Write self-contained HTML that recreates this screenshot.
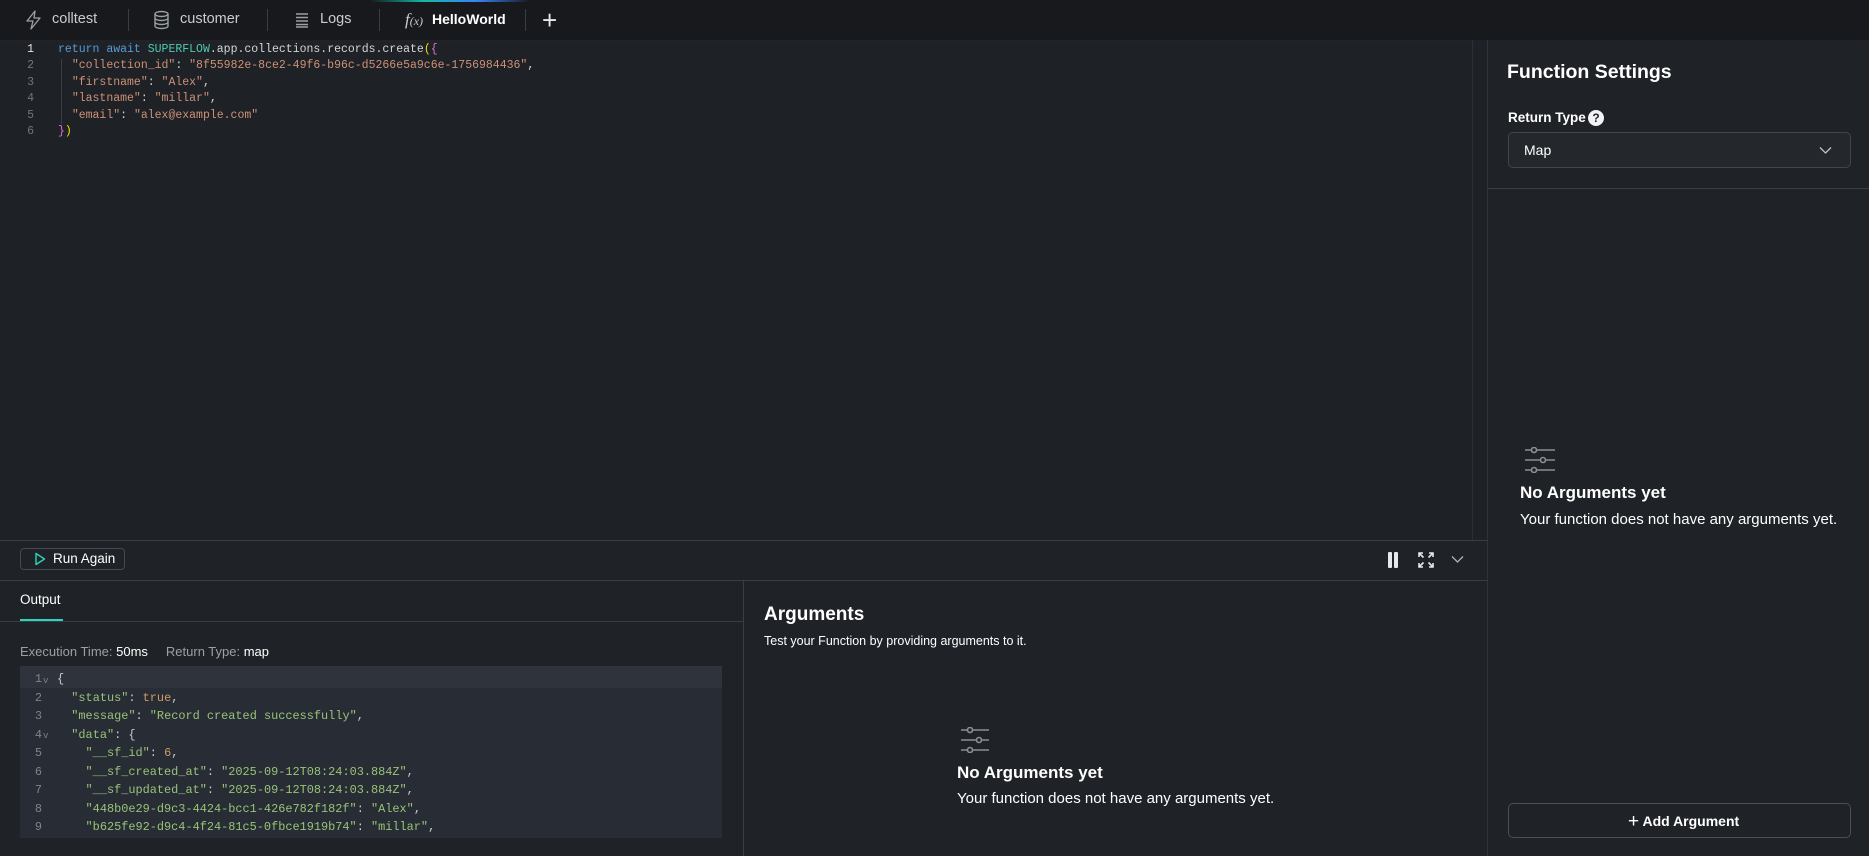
<!DOCTYPE html>
<html><head><meta charset="utf-8">
<style>
*{box-sizing:border-box;margin:0;padding:0}
body{width:1869px;height:856px;overflow:hidden;background:#1f2226;font-family:"Liberation Sans",sans-serif;color:#e6e8ea;position:relative}
.abs{position:absolute}
.top{left:0;top:0;width:1869px;height:40px;background:#17191c}
.tab{position:absolute;top:11px;font-size:14.5px;color:#c9ccd0;white-space:nowrap}
.sep{position:absolute;top:9px;width:1px;height:22px;background:#3a3e44}
.mono{font-family:"Liberation Mono",monospace}
.ed{left:0;top:43px;width:1487px;height:497px;background:#1e2125}
.ln{position:absolute;left:16px;width:18px;text-align:right;color:#6e7681;font-size:11.5px}
.cl{position:absolute;left:58px;font-size:11.5px;white-space:pre;color:#d4d4d4}
.s{color:#ce9178}.k{color:#569cd6}.t{color:#4ec9b0}.y{color:#ffd700}.p{color:#da70d6}
.out .ol{position:absolute;left:28px;width:14px;text-align:right;color:#7d848e;font-size:11.9px}
.out .oc{position:absolute;left:57px;white-space:pre;font-size:11.9px;color:#c8ccd2}
.g{color:#98c379}.o{color:#d19a66}
</style></head><body>
<div class="abs top"></div>
<div class="abs" style="left:370px;top:0;width:160px;height:2px;background:linear-gradient(90deg,rgba(20,184,166,0),#14b8a6,#3b82f6,rgba(59,130,246,0))"></div>
<svg class="abs" style="left:25px;top:10px" width="17" height="20" viewBox="0 0 17 20"><path d="M10 1 L2 11 H8 L6 19 L15 8 H9 Z" fill="none" stroke="#9aa0a6" stroke-width="1.3" stroke-linejoin="round"/></svg>
<div class="tab" style="left:52px">colltest</div>
<div class="sep" style="left:128px"></div>
<svg class="abs" style="left:153px;top:10px" width="17" height="20" viewBox="0 0 17 20"><ellipse cx="8.5" cy="4" rx="6.5" ry="2.5" fill="none" stroke="#9aa0a6" stroke-width="1.4"/><path d="M2 4v12c0 1.4 2.9 2.5 6.5 2.5S15 17.4 15 16V4M2 8c0 1.4 2.9 2.5 6.5 2.5S15 9.4 15 8M2 12c0 1.4 2.9 2.5 6.5 2.5S15 13.4 15 12" fill="none" stroke="#9aa0a6" stroke-width="1.4"/></svg>
<div class="tab" style="left:180px">customer</div>
<div class="sep" style="left:267px"></div>
<svg class="abs" style="left:294px;top:12px" width="16" height="16" viewBox="0 0 16 16"><g stroke="#9aa0a6" stroke-width="1.4"><path d="M2 2h12M2 5.5h12M2 9h12M2 12.5h12M2 15h12"/></g></svg>
<div class="tab" style="left:320px">Logs</div>
<div class="sep" style="left:379px"></div>
<div class="tab" style="left:405px;top:10px;font-family:'Liberation Serif',serif;font-style:italic;color:#c9ccd0;font-size:17px">f<span style="font-size:12px">(x)</span></div>
<div class="tab" style="left:432px;color:#fff;font-weight:bold;font-size:14px">HelloWorld</div>
<div class="sep" style="left:525px"></div>
<div class="tab" style="left:542px;top:5px;font-size:26px;color:#e6e8ea;font-weight:300">+</div>

<div class="abs ed mono">
<div class="ln" style="top:0px;color:#e6e8ea">1</div><div class="cl" style="top:0px"><span class="k">return</span> <span class="k">await</span> <span class="t">SUPERFLOW</span>.app.collections.records.create<span class="y">(</span><span class="p">{</span></div>
<div class="ln" style="top:16.4px">2</div><div class="cl" style="top:16.4px">  <span class="s">"collection_id"</span>: <span class="s">"8f55982e-8ce2-49f6-b96c-d5266e5a9c6e-1756984436"</span>,</div>
<div class="ln" style="top:32.8px">3</div><div class="cl" style="top:32.8px">  <span class="s">"firstname"</span>: <span class="s">"Alex"</span>,</div>
<div class="ln" style="top:49.2px">4</div><div class="cl" style="top:49.2px">  <span class="s">"lastname"</span>: <span class="s">"millar"</span>,</div>
<div class="ln" style="top:65.6px">5</div><div class="cl" style="top:65.6px">  <span class="s">"email"</span>: <span class="s">"alex@example.com"</span></div>
<div class="ln" style="top:82px">6</div><div class="cl" style="top:82px"><span class="p">}</span><span class="y">)</span></div>
<div class="abs" style="left:61px;top:16px;width:1px;height:65px;background:#3a3e44"></div>
</div>
<div class="abs" style="left:1472px;top:40px;width:1px;height:500px;background:#2c3036"></div>
<div class="abs" style="left:1487px;top:40px;width:1px;height:816px;background:#30343a"></div>

<div class="abs" style="left:0;top:540px;width:1487px;height:1px;background:#3a3e44"></div>
<div class="abs" style="left:20px;top:548px;width:105px;height:22px;border:1px solid #454a51;border-radius:4px;background:#1f2226"></div>
<svg class="abs" style="left:34px;top:552px" width="12" height="14" viewBox="0 0 12 14"><path d="M2 1.5 L10.5 7 L2 12.5 Z" fill="none" stroke="#2dd4bf" stroke-width="1.4" stroke-linejoin="round"/></svg>
<div class="abs" style="left:53px;top:551px;font-size:13.5px;color:#fff">Run Again</div>
<div class="abs" style="left:1388px;top:552px;width:4px;height:16px;background:#e6e8ea;border-radius:1px"></div>
<div class="abs" style="left:1394px;top:552px;width:4px;height:16px;background:#e6e8ea;border-radius:1px"></div>
<svg class="abs" style="left:1418px;top:552px" width="16" height="16" viewBox="0 0 16 16"><g fill="none" stroke="#e6e8ea" stroke-width="1.6"><path d="M1 5V1h4M1 1l4.5 4.5M11 1h4v4M15 1l-4.5 4.5M1 11v4h4M1 15l4.5-4.5M15 11v4h-4M15 15l-4.5-4.5"/></g></svg>
<svg class="abs" style="left:1451px;top:555px" width="13" height="9" viewBox="0 0 13 9"><path d="M1 1.5l5.5 5.5L12 1.5" fill="none" stroke="#b0b4ba" stroke-width="1.3"/></svg>
<div class="abs" style="left:0;top:580px;width:1487px;height:1px;background:#3a3e44"></div>

<div class="abs" style="left:20px;top:592px;font-size:13.5px;color:#fff">Output</div>
<div class="abs" style="left:20px;top:619px;width:43px;height:2px;background:#2dd4bf"></div>
<div class="abs" style="left:0;top:621px;width:743px;height:1px;background:#3a3e44"></div>
<div class="abs" style="left:743px;top:580px;width:1px;height:276px;background:#3a3e44"></div>
<div class="abs" style="left:20px;top:644px;font-size:13px;color:#9aa0a6">Execution Time: <span style="color:#fff">50ms</span><span style="display:inline-block;width:18px"></span>Return Type: <span style="color:#fff">map</span></div>
<div class="abs out mono" style="left:20px;top:666px;width:702px;height:172px;background:#282c34;overflow:hidden">
<div class="abs" style="left:0;top:0;width:702px;height:22px;background:#2e333c"></div>
<div style="position:absolute;left:-20px;top:2px;width:722px">
<div class="ol" style="top:4px">1</div><div class="abs" style="left:43px;top:8px;font-size:9px;color:#7d848e">v</div><div class="oc" style="top:4px">{</div>
<div class="ol" style="top:22.5px">2</div><div class="oc" style="top:22.5px">  <span class="g">"status"</span>: <span class="o">true</span>,</div>
<div class="ol" style="top:41px">3</div><div class="oc" style="top:41px">  <span class="g">"message"</span>: <span class="g">"Record created successfully"</span>,</div>
<div class="ol" style="top:59.5px">4</div><div class="abs" style="left:43px;top:63px;font-size:9px;color:#7d848e">v</div><div class="oc" style="top:59.5px">  <span class="g">"data"</span>: {</div>
<div class="ol" style="top:78px">5</div><div class="oc" style="top:78px">    <span class="g">"__sf_id"</span>: <span class="o">6</span>,</div>
<div class="ol" style="top:96.5px">6</div><div class="oc" style="top:96.5px">    <span class="g">"__sf_created_at"</span>: <span class="g">"2025-09-12T08:24:03.884Z"</span>,</div>
<div class="ol" style="top:115px">7</div><div class="oc" style="top:115px">    <span class="g">"__sf_updated_at"</span>: <span class="g">"2025-09-12T08:24:03.884Z"</span>,</div>
<div class="ol" style="top:133.5px">8</div><div class="oc" style="top:133.5px">    <span class="g">"448b0e29-d9c3-4424-bcc1-426e782f182f"</span>: <span class="g">"Alex"</span>,</div>
<div class="ol" style="top:152px">9</div><div class="oc" style="top:152px">    <span class="g">"b625fe92-d9c4-4f24-81c5-0fbce1919b74"</span>: <span class="g">"millar"</span>,</div>
<div class="ol" style="top:170.5px">10</div><div class="oc" style="top:170.5px">    <span class="g">"c3a1f0d2-71b4-4e0a-9d2f-3f5a7e6c1b80"</span>: <span class="g">"alex@example.com"</span></div>
</div></div>

<div class="abs" style="left:764px;top:604px;font-size:19px;font-weight:bold;color:#fff">Arguments</div>
<div class="abs" style="left:764px;top:634px;font-size:12.5px;color:#fff">Test your Function by providing arguments to it.</div>
<svg class="abs" style="left:961px;top:727px" width="28" height="26" viewBox="0 0 28 26"><g fill="none" stroke="#8a8f96" stroke-width="1.6"><path d="M0 3h6M12 3h16M0 13h15M21 13h7M0 23h6M12 23h16"/><circle cx="9" cy="3" r="2.5"/><circle cx="18" cy="13" r="2.5"/><circle cx="9" cy="23" r="2.5"/></g></svg>
<div class="abs" style="left:957px;top:763px;font-size:17px;font-weight:bold;color:#fff">No Arguments yet</div>
<div class="abs" style="left:957px;top:790px;font-size:15px;color:#fff">Your function does not have any arguments yet.</div>

<div class="abs" style="left:1507px;top:61px;font-size:19.5px;font-weight:bold;color:#fff">Function Settings</div>
<div class="abs" style="left:1508px;top:110px;font-size:13.5px;font-weight:bold;color:#fff">Return Type</div>
<div class="abs" style="left:1588px;top:110px;width:16px;height:16px;border-radius:50%;background:#f2f3f5;color:#1f2226;font-size:12px;font-weight:bold;text-align:center;line-height:16px">?</div>
<div class="abs" style="left:1508px;top:132px;width:343px;height:36px;border:1px solid #41464d;border-radius:5px;background:#24272c"></div>
<div class="abs" style="left:1524px;top:142px;font-size:14px;color:#fff">Map</div>
<svg class="abs" style="left:1819px;top:146px" width="13" height="9" viewBox="0 0 13 9"><path d="M1 1.5l5.5 5.5L12 1.5" fill="none" stroke="#c0c4ca" stroke-width="1.3"/></svg>
<div class="abs" style="left:1487px;top:188px;width:382px;height:1px;background:#3a3e44"></div>
<svg class="abs" style="left:1525px;top:447px" width="30" height="26" viewBox="0 0 30 26"><g fill="none" stroke="#8a8f96" stroke-width="1.6"><path d="M0 3h6M12 3h18M0 13h15M21 13h9M0 23h6M12 23h18"/><circle cx="9" cy="3" r="2.5"/><circle cx="18" cy="13" r="2.5"/><circle cx="9" cy="23" r="2.5"/></g></svg>
<div class="abs" style="left:1520px;top:483px;font-size:17px;font-weight:bold;color:#fff">No Arguments yet</div>
<div class="abs" style="left:1520px;top:511px;font-size:15px;color:#fff">Your function does not have any arguments yet.</div>
<div class="abs" style="left:1508px;top:803px;width:343px;height:35px;border:1px solid #4a4f56;border-radius:5px"></div>
<div class="abs" style="left:1628px;top:810px;font-size:14px;font-weight:bold;color:#fff"><span style="font-size:19px;font-weight:normal;position:relative;top:1px">+</span> Add Argument</div>
</body></html>
